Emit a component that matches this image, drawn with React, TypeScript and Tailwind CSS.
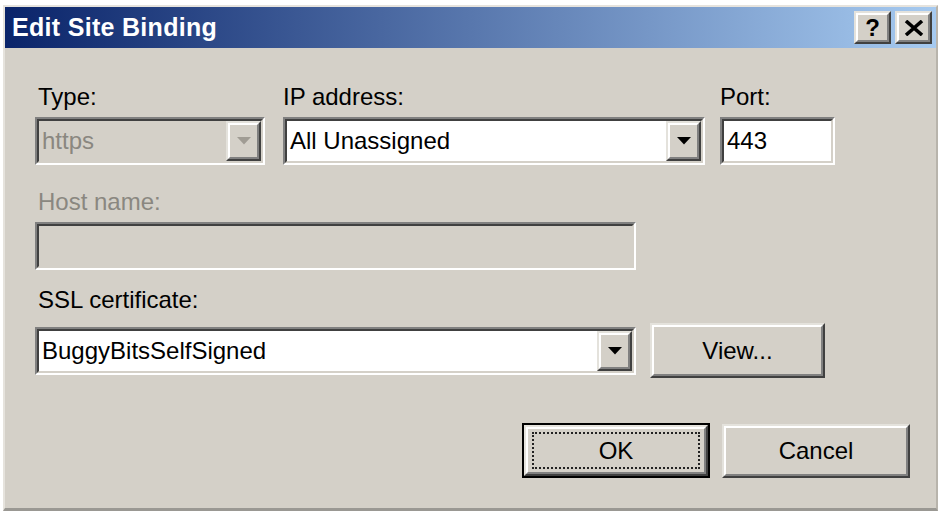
import React from "react";

const font = { fontFamily: '"Liberation Sans", Arial, sans-serif' };

function Sunken({ children, disabled, className }: { children?: React.ReactNode; disabled?: boolean; className?: string }) {
  return (
    <div className={`border-2 border-t-[#808080] border-l-[#808080] border-b-white border-r-white ${className ?? ""}`}>
      <div className={`h-full w-full border-2 border-t-[#404040] border-l-[#404040] border-b-[#d4d0c8] border-r-[#d4d0c8] ${disabled ? "bg-[#d4d0c8]" : "bg-white"} flex items-stretch`}>
        {children}
      </div>
    </div>
  );
}

function Raised({ children, className }: { children?: React.ReactNode; className?: string }) {
  return (
    <div className={`border-2 border-t-[#e4e2dc] border-l-[#e4e2dc] border-b-[#404040] border-r-[#404040] bg-[#d4d0c8] ${className ?? ""}`}>
      <div className="h-full w-full border-2 border-t-white border-l-white border-b-[#808080] border-r-[#808080] flex items-center justify-center">
        {children}
      </div>
    </div>
  );
}

function Arrow({ disabled }: { disabled?: boolean }) {
  return (
    <svg width="14" height="8" viewBox="0 0 14 8">
      <polygon points="0,0 14,0 7,7.5" fill={disabled ? "#a09c94" : "#000"} />
    </svg>
  );
}

function Combo({ text, disabled, className }: { text: string; disabled?: boolean; className?: string }) {
  return (
    <Sunken disabled={disabled} className={className}>
      <div className={`flex-1 flex items-center pl-[3px] text-[24px] leading-none ${disabled ? "text-[#8a8780]" : "text-black"}`}>{text}</div>
      <Raised className="w-[35px]">
        <Arrow disabled={disabled} />
      </Raised>
    </Sunken>
  );
}

function Label({ children, disabled }: { children: React.ReactNode; disabled?: boolean }) {
  return (
    <div className={`h-[28px] leading-[28px] text-[24px] pl-[3px] ${disabled ? "text-[#8a8780]" : "text-black"}`}>{children}</div>
  );
}

export default function App() {
  return (
    <div className="w-[943px] h-[518px] bg-white overflow-hidden" style={font}>
      <div className="ml-[3px] mt-[5px] w-[935px] h-[506px] flex flex-col bg-[#d4d0c8] border-t-2 border-l-2 border-t-[#e6e3dd] border-l-[#e6e3dd] border-r-2 border-r-[#b8b4ac] border-b-[3px] border-b-[#9a9893]">
        {/* Title bar */}
        <div className="h-[41px] flex items-center justify-between pl-[7px] pr-[4px] bg-[linear-gradient(to_right,#0a246a,#a6caf0)]">
          <div className="text-white font-bold text-[25px] tracking-[0.3px] leading-none">Edit Site Binding</div>
          <div className="flex gap-[4px]">
            <Raised className="w-[37px] h-[33px]">
              <span className="font-bold text-[24px] leading-none text-black">?</span>
            </Raised>
            <Raised className="w-[37px] h-[33px]">
              <svg width="20" height="16" viewBox="0 0 20 16">
                <path d="M2 1 L18 15 M18 1 L2 15" stroke="#000" strokeWidth="3.6" />
              </svg>
            </Raised>
          </div>
        </div>

        {/* Body */}
        <div className="flex-1 flex flex-col pl-[30px] pr-[26px] pt-[35px]">
          {/* Row 1 */}
          <div className="flex">
            <div className="w-[230px] flex flex-col">
              <Label>Type:</Label>
              <Combo text="https" disabled className="mt-[6px] h-[48px]" />
            </div>
            <div className="w-[422px] ml-[18px] flex flex-col">
              <div className="h-[28px] leading-[28px] text-[24px] text-black">IP address:</div>
              <Combo text="All Unassigned" className="mt-[6px] h-[48px]" />
            </div>
            <div className="w-[115px] ml-[15px] flex flex-col">
              <div className="h-[28px] leading-[28px] text-[24px] text-black">Port:</div>
              <Sunken className="mt-[6px] h-[48px]">
                <div className="flex-1 flex items-center pl-[3px] text-[24px] leading-none text-black">443</div>
              </Sunken>
            </div>
          </div>

          {/* Row 2 */}
          <div className="mt-[23px] flex flex-col">
            <Label disabled>Host name:</Label>
            <Sunken disabled className="mt-[6px] h-[48px] w-[601px]" />
          </div>

          {/* Row 3 */}
          <div className="mt-[16px]">
            <Label>SSL certificate:</Label>
          </div>
          <div className="mt-[9px] flex items-center">
            <Combo text="BuggyBitsSelfSigned" className="w-[601px] h-[48px]" />
            <Raised className="ml-[14px] w-[175px] h-[55px]">
              <span className="text-[24px] leading-none text-black">View...</span>
            </Raised>
          </div>

          {/* Buttons */}
          <div className="mt-[45px] flex justify-end items-center gap-[12px]">
            <div className="w-[188px] h-[55px] border-2 border-black">
              <Raised className="w-full h-full">
                <div className="w-[168px] h-[37px] border-2 border-dotted border-[#222] flex items-center justify-center">
                  <span className="text-[24px] leading-none text-black">OK</span>
                </div>
              </Raised>
            </div>
            <Raised className="w-[188px] h-[54px]">
              <span className="text-[24px] leading-none text-black">Cancel</span>
            </Raised>
          </div>
        </div>
      </div>
    </div>
  );
}
